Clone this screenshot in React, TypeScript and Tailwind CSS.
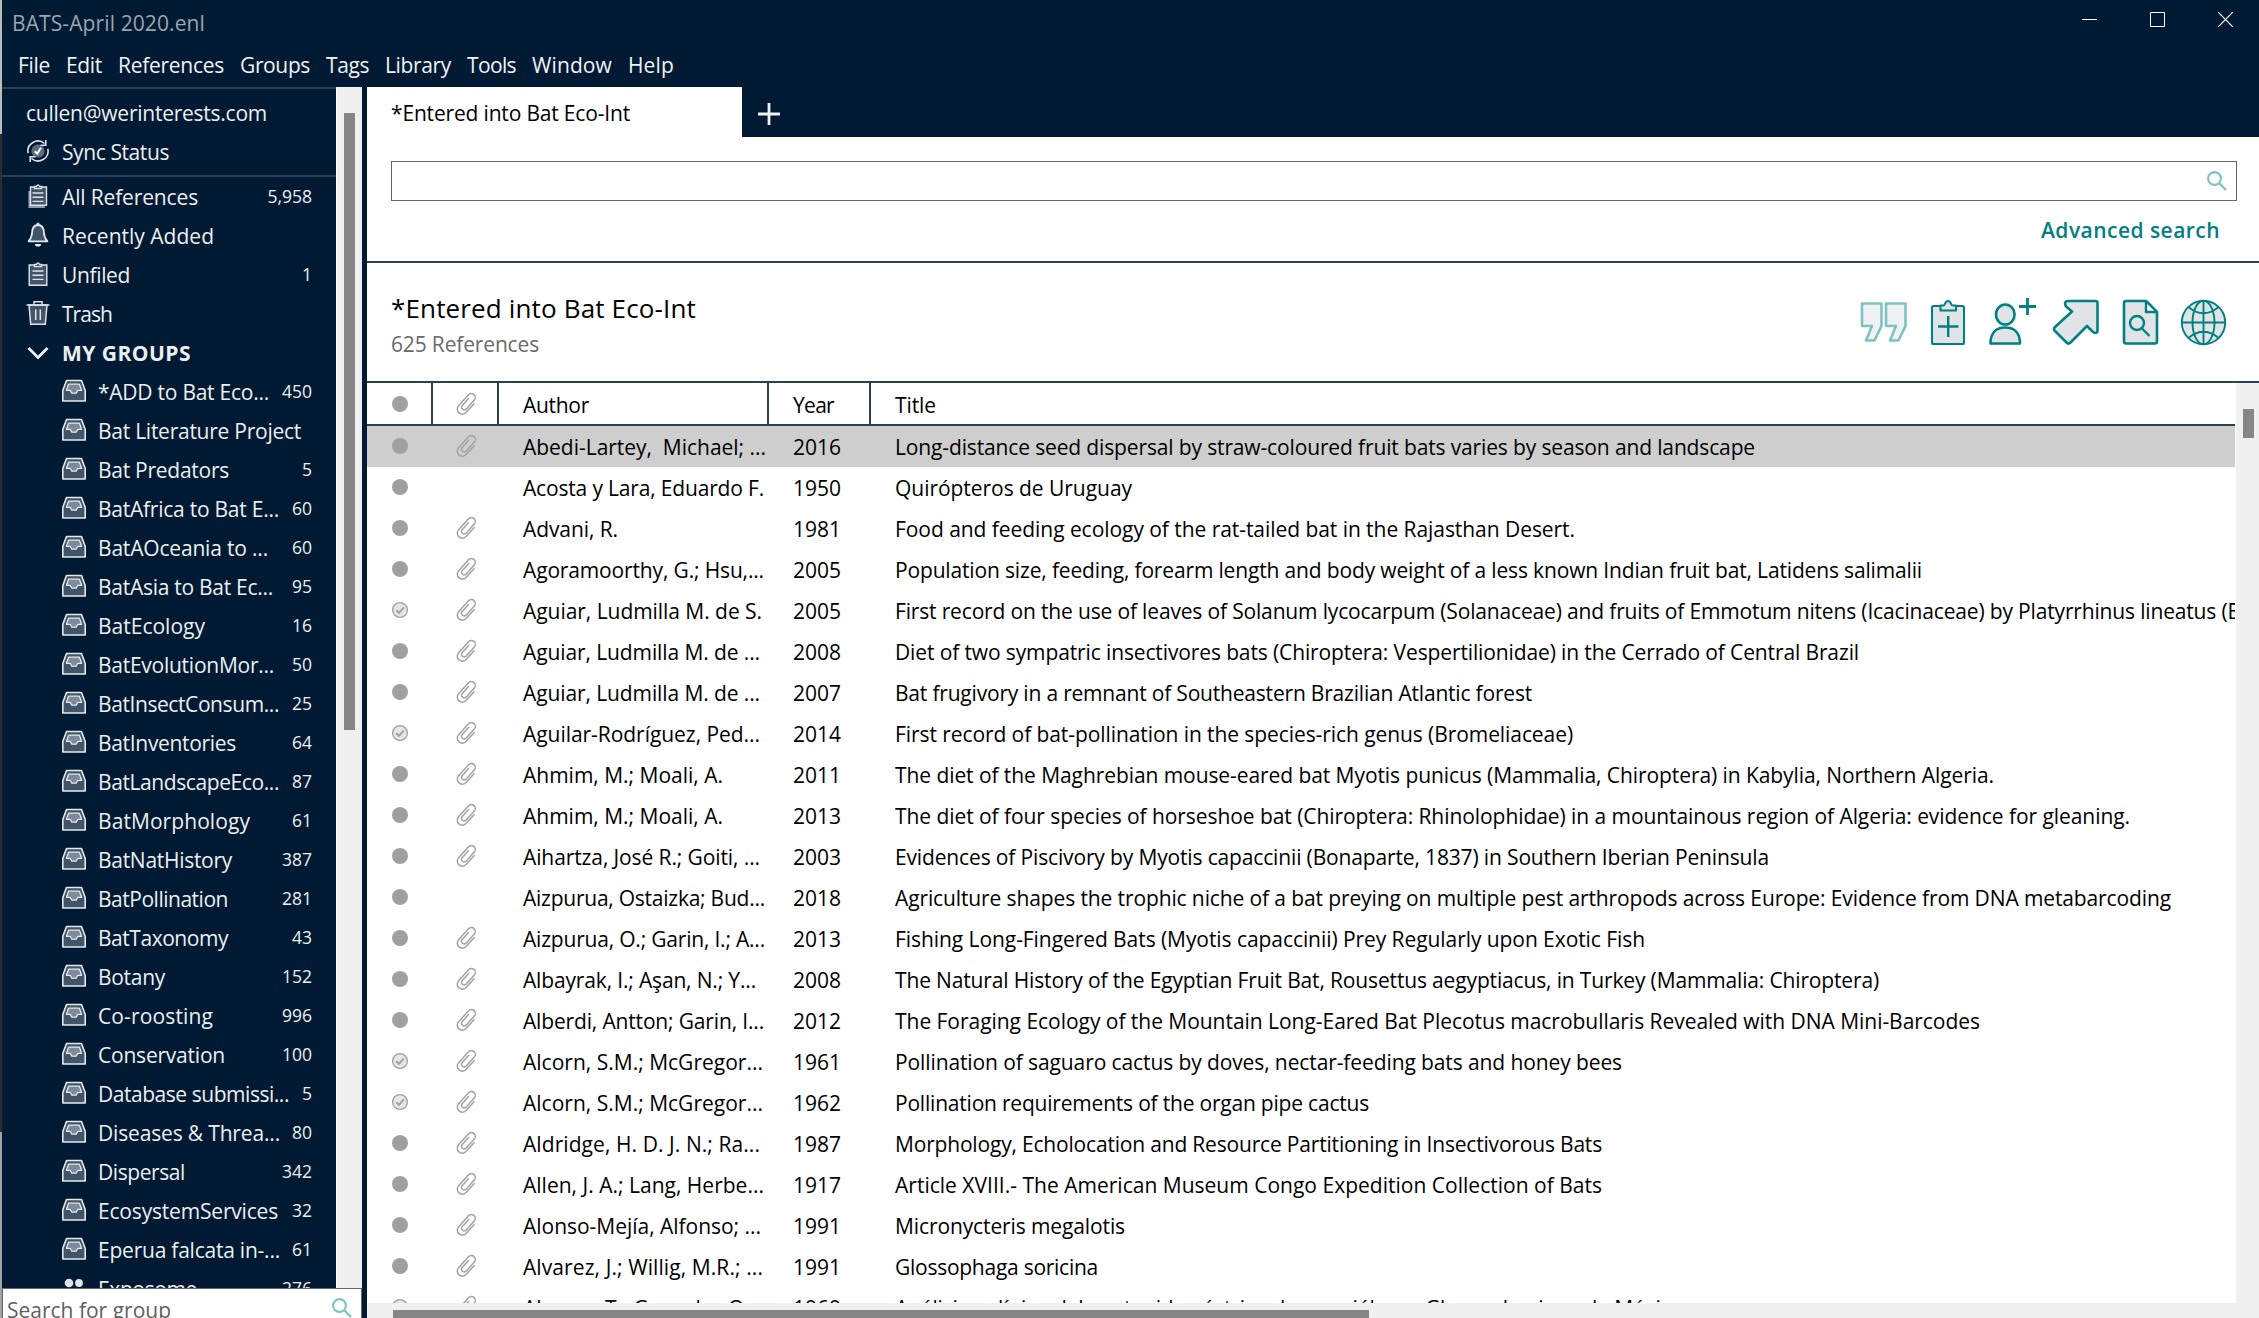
import { useLayoutEffect, useRef, useState, type ReactNode } from "react";

/** Text tracked so that it fills exactly `w` pixels. */
function Fit({ text, w, className = "" }: { text: string; w: number; className?: string }) {
  const ref = useRef<HTMLSpanElement>(null);
  const [spacing, setSpacing] = useState<number | null>(null);
  useLayoutEffect(() => {
    if (!ref.current || spacing !== null) return;
    setSpacing((w - ref.current.getBoundingClientRect().width) / text.length);
  }, [text, w, spacing]);
  return (
    <span ref={ref} className={"inline-block shrink-0 whitespace-pre " + className} style={{ letterSpacing: (spacing ?? 0) + "px" }}>
      {text}
    </span>
  );
}

const menus: [string, number][] = [
  ["File", 32], ["Edit", 36], ["References", 106], ["Groups", 70], ["Tags", 43],
  ["Library", 66], ["Tools", 49], ["Window", 80], ["Help", 46],
];

const groups: [string, number, string][] = [
  ["*ADD to Bat Eco...", 171, "450"],
  ["Bat Literature Project", 203, ""],
  ["Bat Predators", 131, "5"],
  ["BatAfrica to Bat E...", 181, "60"],
  ["BatAOceania to ...", 170, "60"],
  ["BatAsia to Bat Ec...", 175, "95"],
  ["BatEcology", 107, "16"],
  ["BatEvolutionMor...", 176, "50"],
  ["BatInsectConsum...", 181, "25"],
  ["BatInventories", 138, "64"],
  ["BatLandscapeEco...", 181, "87"],
  ["BatMorphology", 152, "61"],
  ["BatNatHistory", 134, "387"],
  ["BatPollination", 130, "281"],
  ["BatTaxonomy", 130, "43"],
  ["Botany", 67, "152"],
  ["Co-roosting", 115, "996"],
  ["Conservation", 127, "100"],
  ["Database submissi...", 191, "5"],
  ["Diseases & Threa...", 182, "80"],
  ["Dispersal", 87, "342"],
  ["EcosystemServices", 180, "32"],
  ["Eperua falcata in-...", 182, "61"],
];

type Row = [author: string, authorW: number, year: string, title: string, titleW: number, checked?: boolean, noFile?: boolean];

const rows: Row[] = [
  ["Abedi-Lartey,  Michael; ...", 243, "2016", "Long-distance seed dispersal by straw-coloured fruit bats varies by season and landscape", 860],
  ["Acosta y Lara, Eduardo F.", 241, "1950", "Quirópteros de Uruguay", 237, false, true],
  ["Advani, R.", 95, "1981", "Food and feeding ecology of the rat-tailed bat in the Rajasthan Desert.", 680],
  ["Agoramoorthy, G.; Hsu,...", 241, "2005", "Population size, feeding, forearm length and body weight of a less known Indian fruit bat, Latidens salimalii", 1027],
  ["Aguiar, Ludmilla M. de S.", 239, "2005", "First record on the use of leaves of Solanum lycocarpum (Solanaceae) and fruits of Emmotum nitens (Icacinaceae) by Platyrrhinus lineatus (E", 1344, true],
  ["Aguiar, Ludmilla M. de ...", 237, "2008", "Diet of two sympatric insectivores bats (Chiroptera: Vespertilionidae) in the Cerrado of Central Brazil", 964],
  ["Aguiar, Ludmilla M. de ...", 237, "2007", "Bat frugivory in a remnant of Southeastern Brazilian Atlantic forest", 637],
  ["Aguilar-Rodríguez, Ped...", 237, "2014", "First record of bat-pollination in the species-rich genus (Bromeliaceae)", 678, true],
  ["Ahmim, M.; Moali, A.", 200, "2011", "The diet of the Maghrebian mouse-eared bat Myotis punicus (Mammalia, Chiroptera) in Kabylia, Northern Algeria.", 1099],
  ["Ahmim, M.; Moali, A.", 200, "2013", "The diet of four species of horseshoe bat (Chiroptera: Rhinolophidae) in a mountainous region of Algeria: evidence for gleaning.", 1235],
  ["Aihartza, José R.; Goiti, ...", 237, "2003", "Evidences of Piscivory by Myotis capaccinii (Bonaparte, 1837) in Southern Iberian Peninsula", 874],
  ["Aizpurua, Ostaizka; Bud...", 242, "2018", "Agriculture shapes the trophic niche of a bat preying on multiple pest arthropods across Europe: Evidence from DNA metabarcoding", 1276, false, true],
  ["Aizpurua, O.; Garin, I.; A...", 242, "2013", "Fishing Long-Fingered Bats (Myotis capaccinii) Prey Regularly upon Exotic Fish", 750],
  ["Albayrak, I.; Aşan, N.; Y...", 233, "2008", "The Natural History of the Egyptian Fruit Bat, Rousettus aegyptiacus, in Turkey (Mammalia: Chiroptera)", 984],
  ["Alberdi, Antton; Garin, I...", 241, "2012", "The Foraging Ecology of the Mountain Long-Eared Bat Plecotus macrobullaris Revealed with DNA Mini-Barcodes", 1085],
  ["Alcorn, S.M.; McGregor...", 240, "1961", "Pollination of saguaro cactus by doves, nectar-feeding bats and honey bees", 727, true],
  ["Alcorn, S.M.; McGregor...", 240, "1962", "Pollination requirements of the organ pipe cactus", 474, true],
  ["Aldridge, H. D. J. N.; Ra...", 237, "1987", "Morphology, Echolocation and Resource Partitioning in Insectivorous Bats", 707],
  ["Allen, J. A.; Lang, Herbe...", 241, "1917", "Article XVIII.- The American Museum Congo Expedition Collection of Bats", 707],
  ["Alonso-Mejía, Alfonso; ...", 238, "1991", "Micronycteris megalotis", 230],
  ["Alvarez, J.; Willig, M.R.; ...", 240, "1991", "Glossophaga soricina", 203],
  ["Alvarez, T.; Gonzalez Q...", 238, "1969", "Análisis polínico del contenido gástrico de murciélagos Glossophaginae de México", 788, true],
];

function Clip() {
  return (
    <svg width="24" height="24" viewBox="-12 -12 24 24" fill="none" stroke="#a3a3a3" strokeWidth="1.5" strokeLinecap="round">
      <path transform="rotate(42)" d="M5 -5V7A5 5 0 0 1 -5 7V-7.8A3.9 3.9 0 0 1 2.8 -7.8V4.8A2.7 2.7 0 0 1 -2.5 4.8V-5" />
    </svg>
  );
}

function Dot({ checked }: { checked?: boolean }) {
  return checked ? (
    <svg width="18" height="18" viewBox="0 0 18 18" fill="#e6e6e6" stroke="#a0a0a0">
      <circle cx="9" cy="9" r="7.4" strokeWidth="1.3" />
      <path d="M5.3 9.2l2.7 2.7 4.9-5.6" fill="none" strokeWidth="2" />
    </svg>
  ) : (
    <span className="size-4 rounded-full bg-[#a0a0a0]" />
  );
}

function Magnifier({ size }: { size: number }) {
  return (
    <svg width={size} height={size} viewBox="0 0 20 20" fill="none" stroke="#80c1c1" strokeWidth="2.1">
      <circle cx="7.5" cy="7.5" r="6.4" />
      <path d="M12.5 12.5L19 19" strokeWidth="2.4" />
    </svg>
  );
}

function Tray() {
  return (
    <svg width="26" height="24" viewBox="0 0 26 24" className="mb-0.5 shrink-0" fill="#425468" stroke="#e6e9ec" strokeWidth="1.6" strokeLinejoin="round">
      <path d="M5.5 1.500H20.5L24.2 11.5V22H1.8V11.5Z" />
      <path d="M7.6 5.2H18.4L20.6 11.3H16.8L15.2 14.2H10.8L9.2 11.3H5.4Z" fill="#7c8b9b" strokeWidth="1.300" />
    </svg>
  );
}

function ClipboardIcon({ stacked }: { stacked?: boolean }) {
  return (
    <svg width="22" height="26" viewBox="0 0 22 26" fill="#425468" stroke="#dfe3e7" strokeWidth="1.4">
      {stacked && <path d="M2.2 8V24.3H18" fill="#8e9aa7" strokeWidth="1.6" stroke="#8e9aa7" />}
      <path d={stacked ? "M3.5 4H19.5V22.3H3.5Z" : "M2.2 4H19.8V24.3H2.2Z"} />
      <path d="M7.5 5.6V3.5H9.3Q11 0.4 12.7 3.5H14.5V5.6Z" />
      <path d="M5.5 10H16.5M5.5 14.2H16.5M5.5 18.4H16.5" />
    </svg>
  );
}

function Bell() {
  return (
    <svg width="22" height="26" viewBox="0 0 22 26" fill="#425468" stroke="#e6e9ec" strokeWidth="1.8" strokeLinejoin="round">
      <path d="M11 3C6.5 3 5.3 6.6 5.1 10.5C4.9 15 4 16.5 1.6 19.4H20.4C18 16.5 17.1 15 16.9 10.5C16.7 6.6 15.500 3 11 3Z" />
      <path d="M11 .8V3" strokeWidth="2.6" />
      <path d="M8 22H14A3 2.600 0 0 1 8 22Z" fill="#e6e9ec" stroke="none" />
    </svg>
  );
}

function TrashIcon() {
  return (
    <svg width="24" height="26" viewBox="0 0 24 26" fill="#425468" stroke="#dfe3e7" strokeWidth="1.5">
      <path d="M3 5L4.700 24.300H19.300L21 5Z" />
      <path d="M.5 5H23.5M8 5V1.800H16V5M9.700 9.500V20M14.300 9.500V20" fill="none" />
    </svg>
  );
}

function SyncIcon() {
  return (
    <svg width="22" height="24" viewBox="0 0 22 24" fill="none" stroke="#dfe3e7" strokeWidth="1.6">
      <circle cx="11" cy="12" r="6.600" fill="#5a6b7d" stroke="none" />
      <path d="M1.200 14.200A10 10 0 0 1 17.500 4.500M20.800 9.800A10 10 0 0 1 4.500 19.500" />
      <path d="M18.800 1V6.300H13.500M3.200 23V17.700H8.500" />
      <path d="M7.800 12.200L10.200 14.600L14 8.800" stroke="#fff" strokeWidth="2" />
    </svg>
  );
}

function SideItem({ icon, label, w, count, bold }: { icon: ReactNode; label: string; w: number; count?: string; bold?: boolean }) {
  return (
    <div className="flex h-[39px] shrink-0 items-center pl-[22px] pr-6">
      <span className="mb-0.5 flex w-7 shrink-0 justify-center">{icon}</span>
      <Fit text={label} w={w} className={bold ? "ml-2.5 pt-px font-bold" : "ml-2.5 pt-px"} />
      <span className="ml-auto pt-px text-[17.5px]">{count}</span>
    </div>
  );
}

function Toolbar() {
  return (
    <svg width="366" height="52" viewBox="0 0 366 52" fill="#e1e4e7" stroke="#008080" strokeWidth="2.1" strokeLinejoin="round">
      <g fill="#f0f1f3" stroke="#80c1c1" strokeWidth="2.600">
        <path d="M2 9.500H21.500V32L14.500 46.500H6L12 32H2Z" />
        <path d="M26 9.500H45.500V32L38.500 46.500H30L36 32H26Z" />
      </g>
      <rect x="72" y="12" width="32" height="38" rx="1.500" />
      <path d="M80.500 16.500V11.500H83.500C85 11.500 85 7 88 7S91 11.500 92.500 11.500H96V16.500Z" />
      <path d="M78 32.500H98.500M88.200 22V43" strokeWidth="2.400" />
      <ellipse cx="145.300" cy="20.500" rx="9.300" ry="10" strokeWidth="2.600" />
      <path d="M130.500 49.500C130.500 39 136 33.500 145.300 33.500S160 39 160 49.500Z" strokeWidth="2.600" />
      <path d="M159 12.500H176M167.500 4V21" strokeWidth="2.800" />
      <path d="M208 7H235.500Q237.500 7 237.500 9V36.500Q237.500 39 235 39Q233.800 39 232.500 37.500L227 32L210.500 48.500Q208.500 50.500 206.500 48.500L195 37Q193 35 195 33L212 17.500L206 12.500Q203.500 7 208 7Z" strokeWidth="2.600" />
      <path d="M266 7H286L297 18V47.500Q297 49.500 295 49.500H266Q264 49.500 264 47.500V9Q264 7 266 7Z" strokeWidth="2.600" />
      <path d="M286 7V18H297Z" fill="#fff" strokeWidth="2.400" />
      <circle cx="277" cy="29" r="7" strokeWidth="2.400" />
      <path d="M282 34.500L289.500 42" strokeWidth="2.400" />
      <g strokeWidth="1.900" fill="none">
        <circle cx="343.500" cy="28.500" r="21.700" fill="#e1e4e7" />
        <ellipse cx="343.500" cy="28.500" rx="11" ry="21.700" />
        <path d="M343.500 7V50M322 28.500H365M329 13.500Q343.500 25 358 13.500M329 43.500Q343.500 32 358 43.500" />
      </g>
    </svg>
  );
}

export default function App() {
  return (
    <div className="flex h-[1318px] w-[2259px] overflow-hidden bg-[#001a33] font-['Open_Sans',sans-serif] text-[21px] leading-none text-black">
      {/* desktop visible beside the window */}
      <div className="flex w-0.5 shrink-0 flex-col">
        <div className="h-[134px] bg-[#b8bcbc]" />
        <div className="h-[998px] bg-[#2e2c2b]" />
        <div className="grow bg-[#a3a3a3]" />
      </div>
      <div className="flex min-w-0 grow flex-col">
        <header className="flex h-[87px] shrink-0 flex-col text-[#f0f2f4]">
          <div className="flex h-11 items-center pl-2.5 pr-[26px]">
            <Fit text="BATS-April 2020.enl" w={193} className="pt-0.5 text-[#9aa5b0]" />
            <div className="mb-[5px] ml-auto flex gap-[53px]">
              <svg width="15" height="15" stroke="#fff"><path d="M0 7.500H15" /></svg>
              <svg width="15" height="15" fill="none" stroke="#fff"><path d="M.5 .5H14.500V14.500H.5Z" /></svg>
              <svg width="15" height="15" stroke="#fff" strokeWidth="1.200"><path d="M0 0L15 15M15 0L0 15" /></svg>
            </div>
          </div>
          <nav className="flex h-[42px] items-center gap-4 pl-4">
            {menus.map(([t, w]) => <Fit key={t} text={t} w={w} />)}
          </nav>
        </header>

        <div className="flex min-h-0 grow">
          <aside className="flex w-[360px] shrink-0 flex-col">
            <div className="flex min-h-0 grow">
              <div className="flex w-[334px] shrink-0 flex-col overflow-hidden border-t-2 border-[#2b4057] text-[#eceff1]">
                <div className="flex shrink-0 flex-col border-b-2 border-[#2b4057] pb-1 pt-1">
                  <div className="flex h-[39px] items-center pl-6">
                    <Fit text="cullen@werinterests.com" w={241} className="pt-px" />
                  </div>
                  <SideItem icon={<SyncIcon />} label="Sync Status" w={107} />
                </div>
                <SideItem icon={<ClipboardIcon stacked />} label="All References" w={136} count="5,958" />
                <SideItem icon={<Bell />} label="Recently Added" w={152} />
                <SideItem icon={<ClipboardIcon />} label="Unfiled" w={68} count="1" />
                <SideItem icon={<TrashIcon />} label="Trash" w={50} />
                <SideItem
                  icon={<svg width="22" height="14" viewBox="0 0 22 14" className="mt-0.5" fill="none" stroke="#eceff1" strokeWidth="2.800"><path d="M1.500 2L11 11.500L20.500 2" /></svg>}
                  label="MY GROUPS"
                  w={129}
                  bold
                />
                {groups.map(([name, w, count]) => (
                  <div key={name} className="flex h-[39px] shrink-0 items-center pl-[59px] pr-6">
                    <Tray />
                    <Fit text={name} w={w} className="ml-[11px] pt-px" />
                    <span className="ml-auto pt-px text-[17.5px]">{count}</span>
                  </div>
                ))}
                <div className="flex h-[39px] shrink-0 items-center pl-[59px] pr-6">
                  <svg width="26" height="24" viewBox="0 0 26 24" fill="#dfe3e7">
                    <circle cx="8" cy="6" r="4.300" />
                    <circle cx="18" cy="6" r="3.900" />
                    <path d="M1 20C1 14 4 11.500 8 11.500S14 14 15 20ZM16 20C16 15 17 12 18 12C22 12 25 15 25 20Z" />
                  </svg>
                  <Fit text="Exposome" w={99} className="ml-[11px] pt-px" />
                  <span className="ml-auto pt-px text-[17.5px]">276</span>
                </div>
              </div>
              <div className="w-[26px] border-l border-white bg-[#f0f0f0] pl-[7px] pt-[26px]">
                <div className="h-[617px] w-[11px] bg-[#868686]" />
              </div>
            </div>
            <div className="flex h-[30px] shrink-0 items-start justify-between overflow-hidden border-x border-t border-[#666] bg-white pl-1 pr-[9px] pt-[9px] text-[#5f5f5f]">
              <Fit text="Search for group" w={164} className="leading-6" />
              <Magnifier size={20} />
            </div>
          </aside>

          <main className="ml-[5px] flex min-w-0 grow flex-col bg-white">
            <div className="flex h-[50px] shrink-0 bg-[#001a33]">
              <div className="flex w-[375px] items-center bg-white pl-6">
                <Fit text="*Entered into Bat Eco-Int" w={239} className="pt-0.5" />
              </div>
              <div className="flex items-center pl-4 pt-1">
                <svg width="22" height="22" stroke="#f0f0f0" strokeWidth="2.800"><path d="M0 11H22M11 0V22" /></svg>
              </div>
            </div>

            <section className="flex h-[126px] shrink-0 flex-col border-b-2 border-[#2b4057] pl-6 pr-[22px] pt-6">
              <div className="flex h-10 shrink-0 items-center justify-end border border-[#666] pr-[9px]">
                <Magnifier size={20} />
              </div>
              <div className="flex justify-end pr-[17px] pt-[19px]">
                <Fit text="Advanced search" w={179} className="font-semibold text-[#008080]" />
              </div>
            </section>

            <section className="flex h-[120px] shrink-0 items-start justify-between border-b-2 border-[#2b4057] pl-6 pr-[33px]">
              <div className="flex flex-col gap-[13px] pt-8">
                <Fit text="*Entered into Bat Eco-Int" w={305} className="self-start text-[26px]" />
                <Fit text="625 References" w={148} className="self-start text-[#6a6a6a]" />
              </div>
              <div className="pt-[31px]"><Toolbar /></div>
            </section>

            <section className="flex min-h-0 grow flex-col">
              <div className="flex h-[920px] shrink-0">
                <div className="flex w-[1868px] shrink-0 flex-col overflow-hidden">
                  <div className="grid h-[43px] shrink-0 grid-cols-[66px_66px_270px_102px_1fr] border-b-2 border-[#2b4057]">
                    <div className="flex items-center justify-center border-r-2 border-[#2b4057] pl-0.5"><Dot /></div>
                    <div className="flex items-center justify-center border-r-2 border-[#2b4057] pl-1"><Clip /></div>
                    <div className="flex items-center border-r-2 border-[#2b4057] pl-6 pt-[3px]"><Fit text="Author" w={66} /></div>
                    <div className="flex items-center border-r-2 border-[#2b4057] pl-6 pt-[3px]"><Fit text="Year" w={41} /></div>
                    <div className="flex items-center pl-6 pt-[3px]"><Fit text="Title" w={41} /></div>
                  </div>
                  {rows.map(([author, aw, year, title, tw, checked, noFile], i) => (
                    <div
                      key={i}
                      className={
                        "grid h-[41px] shrink-0 grid-cols-[66px_66px_270px_102px_1fr] items-center overflow-hidden " +
                        (i === 0 ? "bg-[#cecece]" : "")
                      }
                    >
                      <span className="flex justify-center pb-px"><Dot checked={checked} /></span>
                      <span className="flex justify-center pb-px pl-0.5">{!noFile && <Clip />}</span>
                      <Fit text={author} w={aw} className="ml-6 justify-self-start pt-px" />
                      <Fit text={year} w={48} className="ml-6 justify-self-start pt-px" />
                      <Fit text={title} w={tw} className="ml-6 justify-self-start pt-px" />
                    </div>
                  ))}
                </div>
                <div className="ml-px grow bg-[#f0f0f0] pl-[7px] pt-[26px]">
                  <div className="h-[29px] w-[11px] bg-[#868686]" />
                </div>
              </div>
              <div className="grow bg-[#f0f0f0] pl-[26px] pt-[7px]">
                <div className="h-2 w-[976px] bg-[#868686]" />
              </div>
            </section>
          </main>
        </div>
      </div>
    </div>
  );
}
